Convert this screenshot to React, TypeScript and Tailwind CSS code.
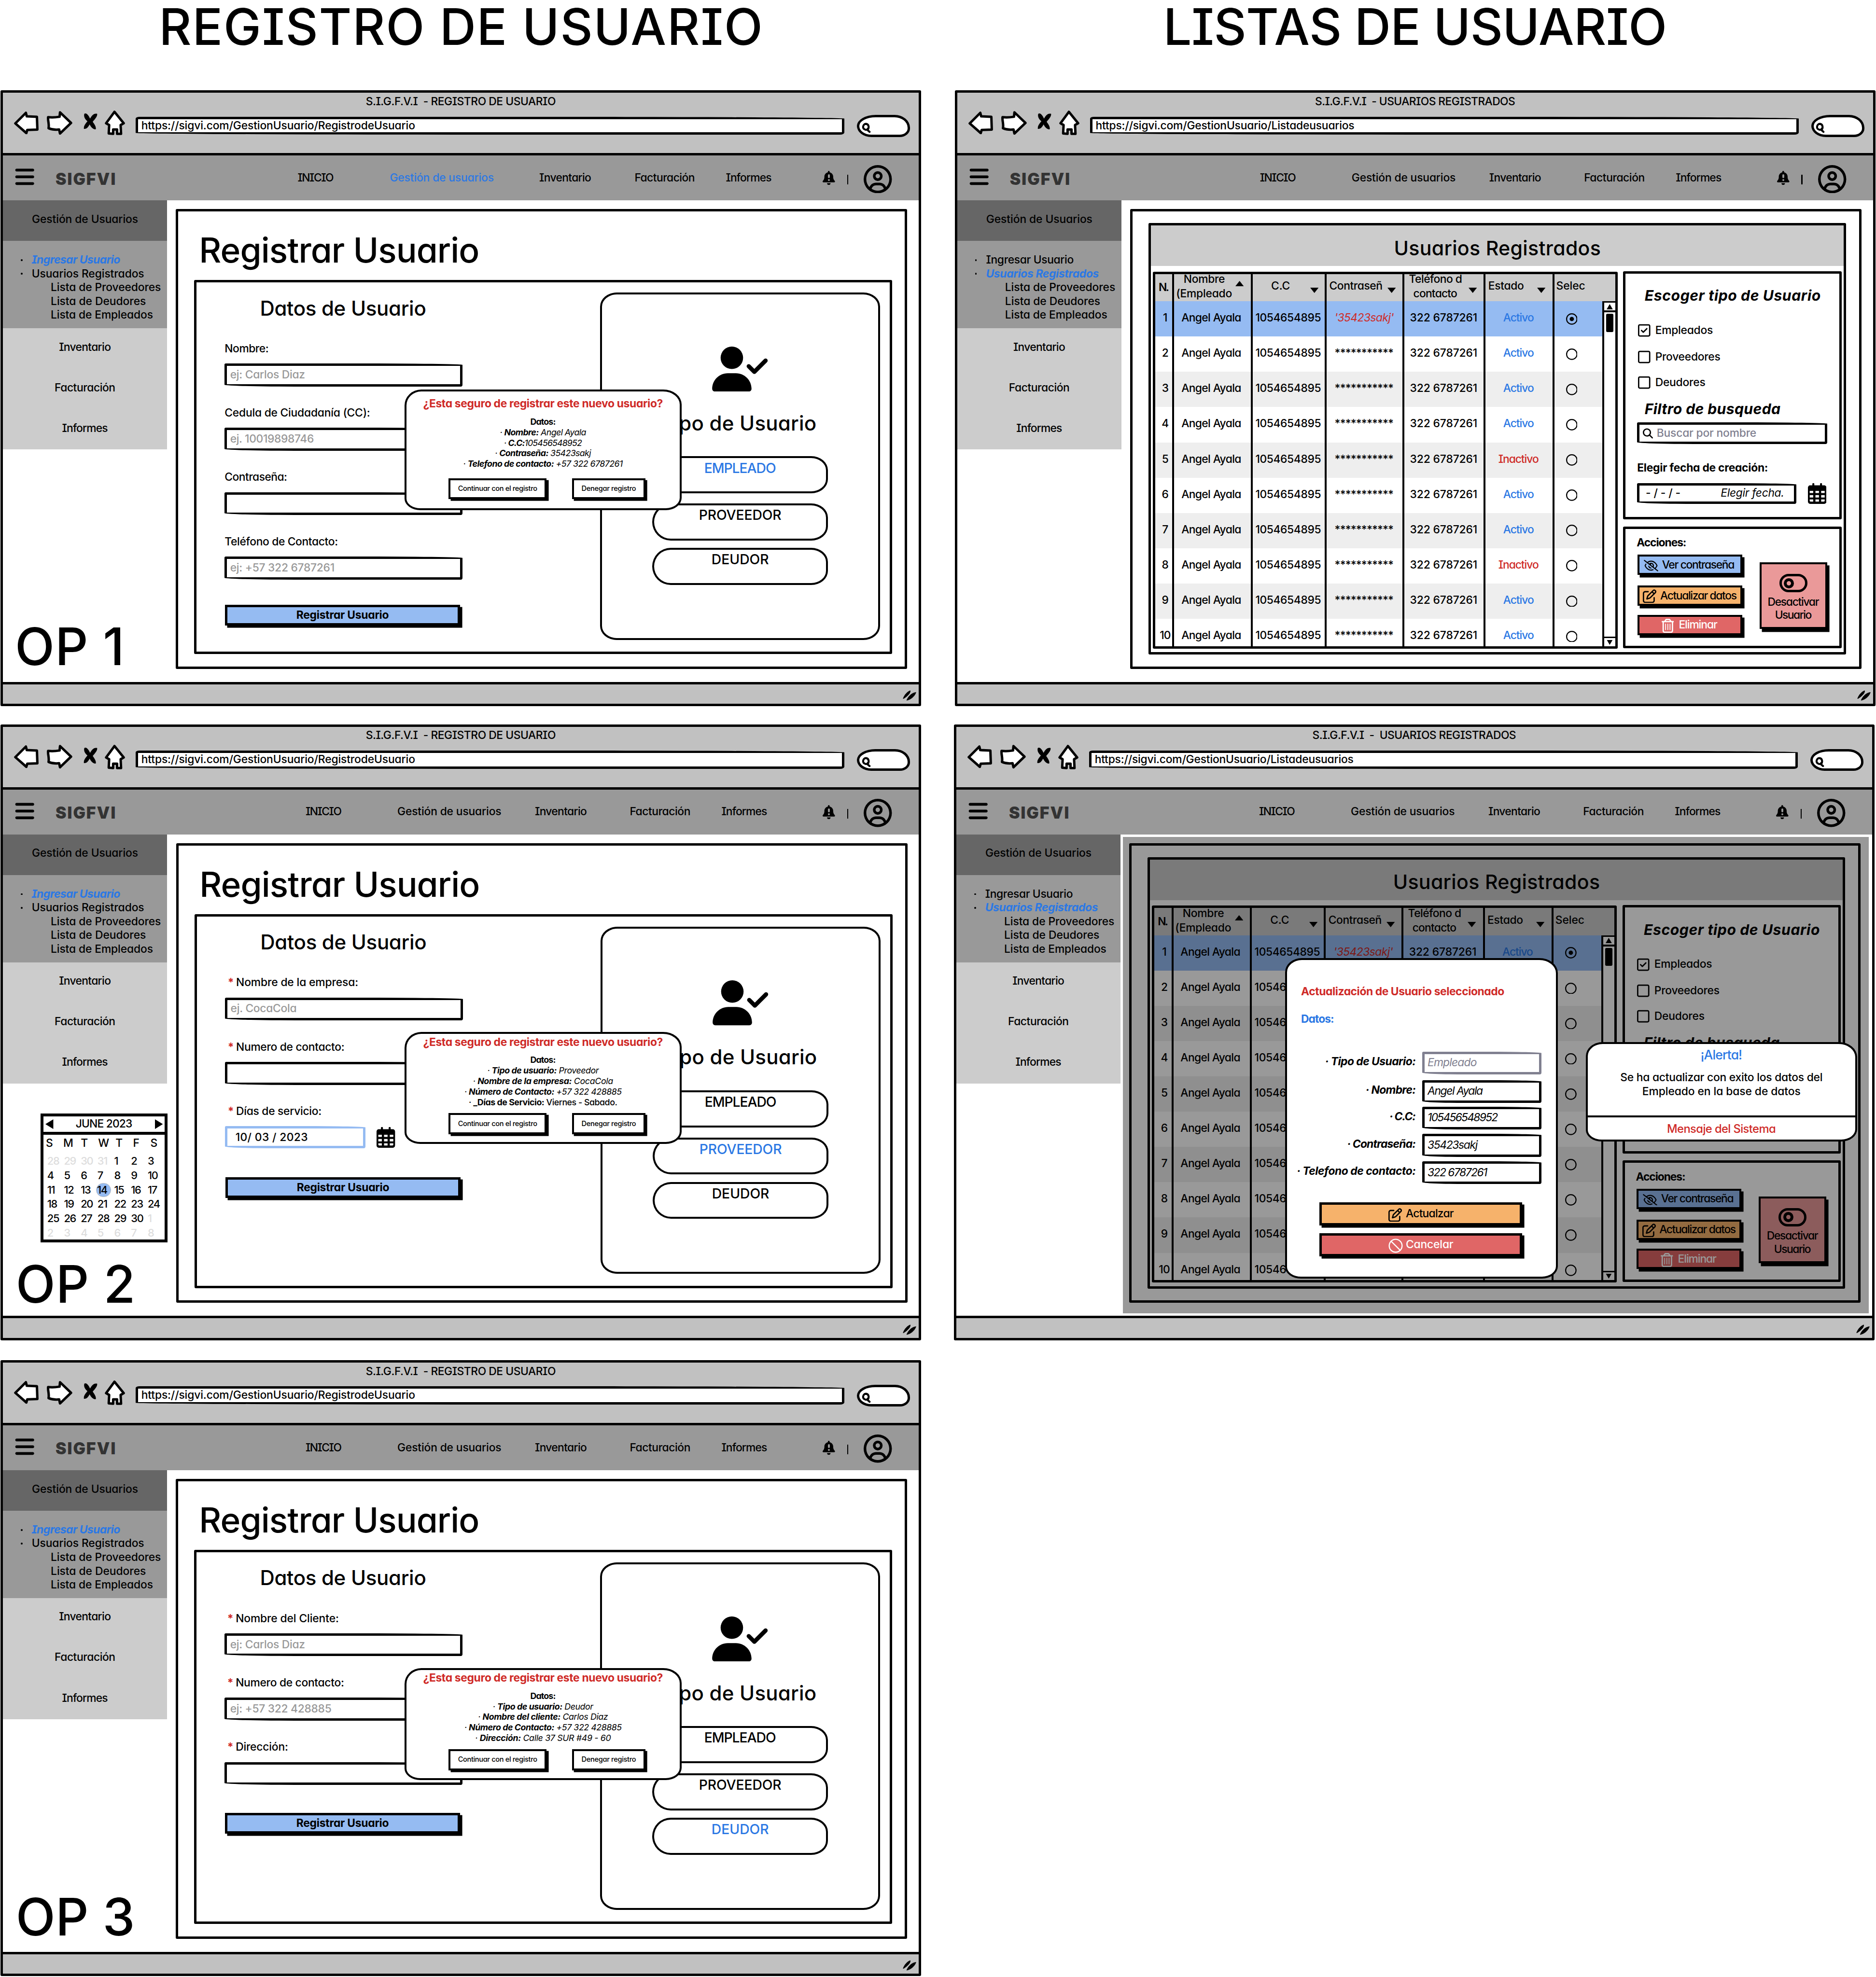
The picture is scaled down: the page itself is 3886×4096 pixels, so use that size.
import { useLayoutEffect, useRef, type ReactNode } from 'react';
import {
  FaBars,
  FaBell,
  FaMagnifyingGlass,
  FaRegCircle,
  FaRegCircleDot,
  FaRegCircleUser,
  FaRegEyeSlash,
  FaRegPenToSquare,
  FaRegSquare,
  FaRegSquareCheck,
  FaRegTrashCan,
  FaUserCheck,
} from 'react-icons/fa6';
import { Ban } from 'lucide-react';

/** Single line of text whose tracking is adjusted so that it fills its box. */
function Fit({ className = '', children }: { className?: string; children: ReactNode }) {
  const outer = useRef<HTMLDivElement>(null);
  const inner = useRef<HTMLSpanElement>(null);
  useLayoutEffect(() => {
    const o = outer.current;
    const i = inner.current;
    if (!o || !i) return;
    i.style.letterSpacing = '0px';
    const target = parseFloat(getComputedStyle(o).width);
    const ratio = i.getBoundingClientRect().width / o.getBoundingClientRect().width;
    const count = Math.max(1, (i.textContent || '').length - 1);
    i.style.letterSpacing = `${((target - target * ratio) / count).toFixed(3)}px`;
  }, []);
  return (
    <div ref={outer} className={`shrink-0 whitespace-pre ${className}`}>
      <span ref={inner} className="inline-block">
        {children}
      </span>
    </div>
  );
}

/* ---------- browser chrome ---------- */

function Toolbar({ url }: { url: ReactNode }) {
  return (
    <div className="flex items-start">
      <svg className="ml-[25px] mt-[2px] h-[52px] w-[57px] shrink-0" viewBox="0 0 57 52" fill="#fff" stroke="#000" strokeWidth="5.5" strokeLinejoin="round">
        <path d="M3 27 L27 3 L29 11 L52 12 L53 41 L30 42 L28 49 Z" />
      </svg>
      <svg className="ml-[16px] mt-[1px] h-[54px] w-[59px] shrink-0" viewBox="0 0 59 54" fill="#fff" stroke="#000" strokeWidth="5.5" strokeLinejoin="round">
        <path d="M4 14 C14 15 24 14 30 13 L31 3 L56 27 L31 51 L29 42 C20 43 12 42 5 39 C7 30 3 22 4 14 Z" />
      </svg>
      <svg className="ml-[24px] mt-[6px] h-[38px] w-[34px] shrink-0" viewBox="0 0 34 38" fill="#000">
        <path d="M3 2 C7 -1 12 4 16 13 C20 5 25 0 32 2 C33 8 27 14 22 20 C26 26 30 31 29 37 C23 38 18 32 15 26 C12 32 8 37 2 36 C1 29 6 24 10 19 C4 14 1 8 3 2 Z" />
      </svg>
      <svg className="ml-[16px] -mt-[1px] h-[57px] w-[46px] shrink-0" viewBox="0 0 46 57" fill="#fff" stroke="#000" strokeWidth="5.5" strokeLinejoin="round">
        <path d="M3 30 L22 4 L43 30 L36 34 L37 54 L28 54 L28 44 L19 44 L19 54 L9 53 L10 34 Z" />
      </svg>
      <div className="ml-[24px] mt-[14px] flex h-[41px] w-[1607px] shrink-0 items-center rounded-[9px_700px_10px_900px/4px_4px_5px_4px] border-[5.5px] border-black bg-white pl-[7px] leading-[30px]">
        {url}
      </div>
      <div className="ml-[28px] mt-[10px] h-[50px] w-[121px] shrink-0 rounded-[44px_36px_24px_34px/26px_30px_20px_26px] border-[5.5px] border-black bg-white">
        <svg className="ml-[3px] mt-[11px] h-[25px] w-[24px]" viewBox="0 0 24 25" fill="none" stroke="#000" strokeWidth="4.5" strokeLinecap="round">
          <path d="M16 17 C19 13 19 5 12 4 C4 4 3 16 10 17 C12 18 15 17 16 15 M14 17 L20 22" />
        </svg>
      </div>
    </div>
  );
}

function Bell() {
  return (
    <div className="relative">
      <FaBell className="h-[32px] w-[28px]" />
      <div className="absolute left-[12px] top-[8px] h-[9px] w-[4px] rounded-full bg-[#999]" />
      <div className="absolute left-[12px] top-[19px] h-[4px] w-[4px] rounded-full bg-[#999]" />
    </div>
  );
}

function CalendarIcon() {
  return (
    <svg className="ml-[26px] h-[47px] w-[42px] shrink-0" viewBox="0 0 42 47">
      <path
        fillRule="evenodd"
        d="M5 5 H10 V2 A2.2 2.2 0 0 1 14.5 2 V5 H27.5 V2 A2.2 2.2 0 0 1 32 2 V5 H37 A5 5 0 0 1 42 10 V42 A5 5 0 0 1 37 47 H5 A5 5 0 0 1 0 42 V10 A5 5 0 0 1 5 5 Z M4 17.5 V22.5 H12 V17.5 Z M17 17.5 V22.5 H25 V17.5 Z M30 17.5 V22.5 H38 V17.5 Z M4 27 V32.5 H12 V27 Z M17 27 V32.5 H25 V27 Z M30 27 V32.5 H38 V27 Z M4 37 V40 A2 2 0 0 0 6 42 H12 V37 Z M17 37 V42 H25 V37 Z M30 37 V42 H36 A2 2 0 0 0 38 40 V37 Z"
      />
    </svg>
  );
}

function Nav({ wide }: { wide?: boolean }) {
  return (
    <div className="flex h-[102px] shrink-0 items-center bg-[#999]">
      <FaBars className="-mt-[4px] h-[49px] w-[99px]" />
      <Fit className="ml-[20px] mt-[5px] w-[136px] text-[37px] font-black leading-[40px] text-[#333] [font-feature-settings:normal]">SIGFVI</Fit>
      <div className="flex items-center">
        {wide ? (
          <>
            <Fit className="ml-[413px] w-[82px]">INICIO</Fit>
            <Fit className="ml-[127px] w-[236px] text-[#2b78e4]">Gestión de usuarios</Fit>
            <Fit className="ml-[103px] w-[118px]">Inventario</Fit>
            <Fit className="ml-[98px] w-[137px]">Facturación</Fit>
            <Fit className="ml-[70px] mr-[116px] w-[104px]">Informes</Fit>
          </>
        ) : (
          <>
            <Fit className="ml-[431px] w-[82px]">INICIO</Fit>
            <Fit className="ml-[126px] w-[236px]">Gestión de usuarios</Fit>
            <Fit className="ml-[76px] w-[118px]">Inventario</Fit>
            <Fit className="ml-[97px] w-[138px]">Facturación</Fit>
            <Fit className="ml-[70px] mr-[126px] w-[104px]">Informes</Fit>
          </>
        )}
      </div>
      <Bell />
      <div className="ml-[27px] mt-[8px] h-[22px] w-[3px] bg-black" />
      <FaRegCircleUser className="ml-[35px] mt-[5px] h-[64px] w-[64px]" />
    </div>
  );
}

function Sidebar({ active }: { active: 'new' | 'list' }) {
  return (
    <div className="w-[371.5px] shrink-0">
      <div className="flex h-[92px] justify-center bg-[#666] pt-[28px]">
        <Fit className="w-[241px]">Gestión de Usuarios</Fit>
      </div>
      <div className="h-[198px] bg-[#999] pt-[28px]">
        <div className="flex h-[31px] items-center pl-[40px]">
          <div className="mr-[21px] h-[4px] w-[4px] rounded-full bg-black" />
          {active === 'new' ? (
            <Fit className="w-[201px] font-bold italic text-[#2b78e4]">Ingresar Usuario</Fit>
          ) : (
            <Fit className="w-[199px]">Ingresar Usuario</Fit>
          )}
        </div>
        <div className="flex h-[31px] items-center pl-[40px]">
          <div className="mr-[21px] h-[4px] w-[4px] rounded-full bg-black" />
          {active === 'new' ? (
            <Fit className="w-[255px]">Usuarios Registrados</Fit>
          ) : (
            <Fit className="w-[256px] font-bold italic text-[#2b78e4]">Usuarios Registrados</Fit>
          )}
        </div>
        <div className="pl-[108px] leading-[31px]">
          <Fit className="w-[250px]">Lista de Proveedores</Fit>
          <Fit className="w-[216px]">Lista de Deudores</Fit>
          <Fit className="w-[232px]">Lista de Empleados</Fit>
        </div>
      </div>
      <div className="flex h-[275px] flex-col items-center gap-[62px] bg-[#ccc] pt-[28px]">
        <Fit className="w-[118px]">Inventario</Fit>
        <Fit className="w-[138px]">Facturación</Fit>
        <Fit className="w-[104px]">Informes</Fit>
      </div>
    </div>
  );
}

function BrowserWindow({
  title,
  url,
  wideNav,
  active,
  caption,
  overlay,
  children,
  className = '',
}: {
  title: ReactNode;
  url: ReactNode;
  wideNav?: boolean;
  active: 'new' | 'list';
  caption?: ReactNode;
  overlay?: ReactNode;
  children: ReactNode;
  className?: string;
}) {
  return (
    <section className={`relative flex h-[1397px] w-[2087px] flex-col rounded-[3px] border-[5.5px] border-black bg-white ${className}`}>
      <header className="h-[142px] shrink-0 border-b-[5.5px] border-black bg-[#c1c1c1] pt-[5px]">
        <div className="flex h-[35px] justify-center">{title}</div>
        <Toolbar url={url} />
      </header>
      <Nav wide={wideNav} />
      <div className="flex h-[1092px] shrink-0">
        <div className="flex flex-col">
          <Sidebar active={active} />
          {caption}
        </div>
        <div className="ml-[20.5px] mt-[19.5px] h-[1043px] w-[1658px] rounded-[3px] border-[5.5px] border-black">{children}</div>
      </div>
      <footer className="flex h-[50px] justify-end border-t-[5.5px] border-black bg-[#c1c1c1] pr-[5px] pt-[14px]">
        <svg className="h-[25px] w-[32px]" viewBox="0 0 32 25">
          <path d="M2 19 C5 10 12 3 18 1 C19 7 11 14 3 19 Z M10 23 C14 13 22 6 31 5 C28 14 20 21 10 23 Z" fill="#000" stroke="#000" strokeLinejoin="round" />
        </svg>
      </footer>
      {overlay}
    </section>
  );
}

/* ---------- user registration ---------- */

const Star = () => <span className="w-[19px] font-bold text-[#cf2a27]">*</span>;

function Field({ required, label, children }: { required?: boolean; label: ReactNode; children: ReactNode }) {
  return (
    <div className="h-[146px]">
      <div className={required ? 'flex pl-[6px]' : 'flex'}>
        {required && <Star />}
        {label}
      </div>
      <div className="mt-[18.5px] flex items-center">{children}</div>
    </div>
  );
}

function Input({ children }: { children?: ReactNode }) {
  return (
    <div className="flex h-[52px] w-[539px] items-center rounded-[3px_240px_4px_200px/3px_3px_4px_4px] border-[5.5px] border-black bg-white pb-[1px] pl-[7px] text-[25px] text-[#999]">
      {children}
    </div>
  );
}

function RoleButton({ active, className, children }: { active?: boolean; className: string; children: ReactNode }) {
  return (
    <div
      className={`flex h-[84px] w-[399px] justify-center rounded-[42px_38px_38px_42px/42px_32px_32px_42px] border-[4.4px] border-black pt-[8px] text-[31px] ${active ? 'text-[#2b78e4]' : 'text-black'} ${className}`}
    >
      {children}
    </div>
  );
}

type Role = 'empleado' | 'proveedor' | 'deudor';

function RegisterPage({ role, fields }: { role: Role; fields: ReactNode }) {
  return (
    <>
      <Fit className="ml-[47px] mt-[48.5px] w-[636px] text-[78px] font-medium leading-[80px]">Registrar Usuario</Fit>
      <div className="ml-[35.5px] mt-[27.5px] flex h-[848px] w-[1583px] rounded-[3px] border-[5.5px] border-black">
        <div className="w-[915.5px] pl-[64px] pt-[33px]">
          <Fit className="ml-[80px] w-[377px] text-[46px] font-medium leading-[50px]">Datos de Usuario</Fit>
          <div className="mt-[52px]">{fields}</div>
          <div
            className={`ml-[1px] flex h-[47px] w-[533px] items-center justify-center border-[5.5px] border-black bg-[#95bbf2] font-bold shadow-[5px_5px_0_#000] ${role === 'empleado' ? 'mt-[12px]' : 'mt-[18px]'}`}
          >
            <Fit className="w-[210px]">Registrar Usuario</Fit>
          </div>
        </div>
        <div className="mt-[22.5px] flex h-[788px] w-[635px] flex-col items-center rounded-[38px/32px] border-[4.4px] border-black pt-[118px]">
          <FaUserCheck className="h-[102px] w-[128px]" />
          <Fit className="-ml-[8px] mt-[47px] w-[354px] text-[46px] font-medium leading-[50px]">Tipo de Usuario</Fit>
          <RoleButton active={role === 'empleado'} className="mt-[50px]">
            <Fit className="w-[163px]">EMPLEADO</Fit>
          </RoleButton>
          <RoleButton active={role === 'proveedor'} className="mt-[23px]">
            <Fit className="w-[187px]">PROVEEDOR</Fit>
          </RoleButton>
          <RoleButton active={role === 'deudor'} className="mt-[17px]">
            <Fit className="w-[130px]">DEUDOR</Fit>
          </RoleButton>
        </div>
      </div>
    </>
  );
}

function ConfirmPopup({ tall, children }: { tall?: boolean; children: ReactNode }) {
  return (
    <div
      className={`absolute left-[910.5px] flex w-[628px] flex-col items-center rounded-[38px_42px_36px_36px/36px_34px_28px_26px] border-[4.4px] border-black bg-white ${tall ? 'top-[672.5px] h-[274px] pt-[14px]' : 'top-[692.5px] h-[254px] pt-[4px]'}`}
    >
      <Fit className="w-[544px] text-[25px] font-bold text-[#cf2a27]">¿Esta seguro de registrar este nuevo usuario?</Fit>
      <div className="mt-[13px] flex flex-col items-center text-[19.5px] leading-[24px]">
        <Fit className="w-[58px] font-bold">Datos:</Fit>
        {children}
      </div>
      <div className={`flex gap-[58px] pl-[18px] text-[16px] ${tall ? 'mt-[20px]' : 'mt-[12.5px]'}`}>
        <div className="flex h-[48px] w-[222px] items-center justify-center border-[4.4px] border-black shadow-[5px_4px_0_#000]">
          <Fit className="w-[180px]">Continuar con el registro</Fit>
        </div>
        <div className="flex h-[48px] w-[166px] items-center justify-center border-[4.4px] border-black shadow-[4px_4px_0_#000]">
          <Fit className="w-[124px]">Denegar registro</Fit>
        </div>
      </div>
    </div>
  );
}

function RegisterWindow({ caption, overlay, role, fields, className }: { caption: ReactNode; overlay: ReactNode; role: Role; fields: ReactNode; className?: string }) {
  return (
    <BrowserWindow
      title={<Fit className="w-[431px] text-[25px]">{'S.I.G.F.V.I  - REGISTRO DE USUARIO'}</Fit>}
      url={<Fit className="w-[621px]">https://sigvi.com/GestionUsuario/RegistrodeUsuario</Fit>}
      wideNav={role === 'empleado'}
      active="new"
      caption={caption}
      overlay={overlay}
      className={className}
    >
      <RegisterPage role={role} fields={fields} />
    </BrowserWindow>
  );
}

const weekRows: number[][] = [
  [28, 29, 30, 31, 1, 2, 3],
  [4, 5, 6, 7, 8, 9, 10],
  [11, 12, 13, 14, 15, 16, 17],
  [18, 19, 20, 21, 22, 23, 24],
  [25, 26, 27, 28, 29, 30, 1],
  [2, 3, 4, 5, 6, 7, 8],
];

function CalendarCard() {
  return (
    <div className="ml-[85.5px] mt-[68px] h-[292px] w-[287px] border-[6.6px] border-black bg-white">
      <div className="flex h-[42px] items-center justify-between border-b-[6.6px] border-black px-[4px]">
        <svg className="h-[22px] w-[18px]" viewBox="0 0 18 22">
          <path d="M0 11 L18 0 V22 Z" />
        </svg>
        <Fit className="w-[129px]">JUNE 2023</Fit>
        <svg className="h-[22px] w-[18px]" viewBox="0 0 18 22">
          <path d="M18 11 L0 0 V22 Z" />
        </svg>
      </div>
      <div className="grid grid-cols-[repeat(7,39.5px)] pl-[5px] pt-[4px]">
        {['S', 'M', 'T', 'W', 'T', 'F', 'S'].map((d, i) => (
          <div key={i}>{d}</div>
        ))}
      </div>
      <div className="mt-[9px] grid grid-cols-[repeat(7,38px)] pl-[8px] text-[24px] leading-[32.8px]">
        {weekRows.map((row, r) =>
          row.map((d, c) => {
            const faint = (r === 0 && d > 7) || (r >= 4 && d < 9);
            const today = r === 2 && d === 14;
            return (
              <div key={`${r}-${c}`} className={faint ? 'tracking-[-1.5px] text-[#ddd]' : 'tracking-[-1.5px]'}>
                {today ? (
                  <div className="-ml-[3px] h-[32.8px] w-[34px] rounded-full border-[2px] border-[#bbb] bg-[#95bbf2] pl-[1px] leading-[29px]">{d}</div>
                ) : (
                  d
                )}
              </div>
            );
          }),
        )}
      </div>
    </div>
  );
}

/* ---------- registered users ---------- */

function Arrow({ up, className = '' }: { up?: boolean; className?: string }) {
  return (
    <svg className={`h-[12px] w-[19px] shrink-0 ${className}`} viewBox="0 0 19 12">
      <path d={up ? 'M9.5 0 L19 12 H0 Z' : 'M0 0 H19 L9.5 12 Z'} />
    </svg>
  );
}

const CELL = 'flex items-center border-r-[4.4px] border-black';

function UserTable() {
  const rows = Array.from({ length: 10 }, (_, i) => ({ n: i + 1, active: i !== 4 && i !== 7 }));
  return (
    <div className="ml-[4px] mt-[12.5px] flex h-[855px] w-[1054px] flex-col overflow-hidden rounded-[3px] border-[5.5px] border-black">
      <div className="grid h-[62px] shrink-0 grid-cols-[43.5px_177.5px_168px_176.5px_184px_156px_137.5px] bg-[#ccc]">
        <div className={CELL}>
          <Fit className="ml-[8px] w-[24px] font-semibold">N.</Fit>
        </div>
        <div className={CELL}>
          <div className="-mt-[6px] ml-[4px] w-[127px] leading-[33px]">
            <Fit className="ml-[17px] w-[94px]">Nombre</Fit>
            <Fit className="w-[127px]">(Empleado</Fit>
          </div>
          <Arrow up className="-mt-[18px] ml-[8px]" />
        </div>
        <div className={CELL}>
          <Fit className="-mt-[6px] ml-[42px] w-[43px]">C.C</Fit>
          <Arrow className="ml-[46px] mt-[13px]" />
        </div>
        <div className={CELL}>
          <Fit className="-mt-[6px] ml-[6px] w-[121px]">Contraseñ</Fit>
          <Arrow className="ml-[11px] mt-[13px]" />
        </div>
        <div className={CELL}>
          <div className="-mt-[6px] ml-[10px] w-[121px] leading-[33px]">
            <Fit className="w-[121px]">Teléfono d</Fit>
            <Fit className="ml-[10px] w-[100px]">contacto</Fit>
          </div>
          <Arrow className="ml-[14px] mt-[13px]" />
        </div>
        <div className={CELL}>
          <Fit className="-mt-[6px] ml-[6px] w-[81px]">Estado</Fit>
          <Arrow className="ml-[30px] mt-[13px]" />
        </div>
        <div className="flex items-center">
          <Fit className="-mt-[6px] ml-[4px] w-[66px]">Selec</Fit>
        </div>
      </div>
      <div className="flex min-h-0 flex-1">
        <div className="w-[1014px] shrink-0">
          {rows.map(({ n, active }) => (
            <div
              key={n}
              className={`grid h-[80px] grid-cols-[43.5px_177.5px_168px_176.5px_184px_156px_108.5px] ${n === 1 ? 'bg-[#95bbf2]' : n % 2 ? 'bg-[#eee]' : 'bg-white'}`}
            >
              <div className={`${CELL} justify-center pb-[4px] pl-[6px] tracking-[-1px]`}>{n}</div>
              <div className={`${CELL} justify-center pb-[4px] pr-[5px]`}>
                <Fit className="w-[136px]">Angel Ayala</Fit>
              </div>
              <div className={`${CELL} justify-center pb-[4px] pr-[2px]`}>
                <Fit className="w-[149px]">1054654895</Fit>
              </div>
              <div className={`${CELL} justify-center pb-[4px] pr-[2px]`}>
                {n === 1 ? (
                  <Fit className="w-[135px] italic text-[#cf2a27]">'35423sakj'</Fit>
                ) : (
                  <Fit className="w-[134px] font-medium">***********</Fit>
                )}
              </div>
              <div className={`${CELL} justify-center pb-[4px] pr-[2px]`}>
                <Fit className="w-[153px]">322 6787261</Fit>
              </div>
              <div className={`${CELL} justify-center pb-[4px] pr-[2px]`}>
                {active ? <Fit className="w-[70px] text-[#2b78e4]">Activo</Fit> : <Fit className="w-[92px] text-[#cf2a27]">Inactivo</Fit>}
              </div>
              <div className="flex items-center pl-[26px]">
                {n === 1 ? <FaRegCircleDot className="h-[26px] w-[26px]" /> : <FaRegCircle className="h-[26px] w-[26px]" />}
              </div>
            </div>
          ))}
        </div>
        <div className="flex w-[29px] shrink-0 flex-col items-center border-l-[4.4px] border-t-[3.3px] border-black bg-white">
          <div className="flex h-[22px] w-full items-center justify-center border-b-[4.4px] border-black">
            <svg className="h-[12px] w-[14px]" viewBox="0 0 14 12">
              <path d="M7 0 L14 12 H0 Z" />
            </svg>
          </div>
          <div className="mt-[3px] h-[41px] w-[16px] rounded-[3px] bg-black" />
          <div className="mt-auto flex h-[21px] w-full items-center justify-center border-t-[3.3px] border-black">
            <svg className="h-[11px] w-[14px]" viewBox="0 0 14 12">
              <path d="M0 0 H14 L7 12 Z" />
            </svg>
          </div>
        </div>
      </div>
    </div>
  );
}

const ACTION = 'flex w-[237px] h-[46px] items-center border-[4.4px] border-black shadow-[5px_6px_0_#000]';

function ListPage() {
  return (
    <div className="ml-[36px] mt-[26.5px] flex h-[979px] w-[1582px] flex-col rounded-[3px] border-[5.5px] border-black">
      <div className="flex h-[92px] shrink-0 justify-center bg-[#ccc] pt-[27px]">
        <Fit className="w-[469px] text-[45px] font-medium leading-[50px]">Usuarios Registrados</Fit>
      </div>
      <div className="flex">
        <UserTable />
        <div className="ml-[13px] mt-[11.5px]">
          <div className="h-[563px] w-[495px] rounded-[3px] border-[5.5px] border-black">
            <Fit className="ml-[43px] mt-[30px] w-[399px] text-[33px] font-bold italic leading-[40px]">Escoger tipo de Usuario</Fit>
            <div className="ml-[28px] mt-[43px] flex h-[32px] items-center">
              <FaRegSquareCheck className="h-[32px] w-[28px]" />
              <Fit className="ml-[11px] w-[131px]">Empleados</Fit>
            </div>
            <div className="ml-[28px] mt-[28px] flex h-[32px] items-center">
              <FaRegSquare className="h-[32px] w-[28px]" />
              <Fit className="ml-[11px] w-[148px]">Proveedores</Fit>
            </div>
            <div className="ml-[28px] mt-[26px] flex h-[32px] items-center">
              <FaRegSquare className="h-[32px] w-[28px]" />
              <Fit className="ml-[11px] w-[114px]">Deudores</Fit>
            </div>
            <Fit className="ml-[43px] mt-[24px] w-[308px] text-[33px] font-bold italic leading-[40px]">Filtro de busqueda</Fit>
            <div className="ml-[26px] mt-[11px] flex h-[49px] w-[431px] items-center rounded-[3px_200px_4px_160px/3px_3px_4px_4px] border-[5.5px] border-black pl-[7px]">
              <FaMagnifyingGlass className="h-[24px] w-[23px]" />
              <Fit className="ml-[9px] w-[226px] text-[#808090]">Buscar por nombre</Fit>
            </div>
            <Fit className="ml-[26px] mt-[39px] w-[297px] font-bold">Elegir fecha de creación:</Fit>
            <div className="ml-[26px] mt-[19px] flex items-center">
              <div className="flex h-[48px] w-[361px] items-center justify-between rounded-[3px_160px_4px_140px/3px_3px_4px_4px] border-[5.5px] border-black pb-[1px] pl-[14px] pr-[22px]">
                <Fit className="w-[79px]">- / - / -</Fit>
                <Fit className="w-[144px] italic">Elegir fecha.</Fit>
              </div>
              <CalendarIcon />
            </div>
          </div>
          <div className="mt-[16px] flex h-[276px] w-[495px] rounded-[3px] border-[5.5px] border-black">
            <div className="ml-[25px] w-[281px]">
              <Fit className="mt-[17px] w-[113px] font-bold">Acciones:</Fit>
              <div className={`${ACTION} ml-[2px] mt-[12px] bg-[#95bbf2]`}>
                <FaRegEyeSlash className="ml-[10px] mt-[3px] h-[26px] w-[33px]" />
                <Fit className="ml-[8px] w-[165px]">Ver contraseña</Fit>
              </div>
              <div className={`${ACTION} ml-[2px] mt-[24px] bg-[#f6b26b]`}>
                <FaRegPenToSquare className="ml-[8px] mt-[2px] h-[31px] w-[31px]" />
                <Fit className="ml-[8px] w-[174px]">Actualizar datos</Fit>
              </div>
              <div className={`${ACTION} ml-[2px] mt-[20px] bg-[#e06666] text-white`}>
                <FaRegTrashCan className="ml-[50px] mt-[4px] h-[32px] w-[28px]" />
                <Fit className="ml-[11px] w-[88px]">Eliminar</Fit>
              </div>
            </div>
            <div className="-ml-[2px] mt-[76px] flex h-[151px] w-[153px] flex-col items-center border-[4.4px] border-black bg-[#ea9999] pt-[22px] leading-[30px] shadow-[5px_7px_0_#000]">
              <div className="mb-[7px] flex h-[42px] w-[64px] items-center rounded-full border-[5.5px] border-black pl-[5px]">
                <div className="h-[23px] w-[23px] rounded-full border-[6.6px] border-black" />
              </div>
              <Fit className="w-[117px]">Desactivar</Fit>
              <Fit className="w-[84px]">Usuario</Fit>
            </div>
          </div>
        </div>
      </div>
    </div>
  );
}

function ModalField({ label, disabled, className = '', children }: { label: ReactNode; disabled?: boolean; className?: string; children: ReactNode }) {
  return (
    <div className={`flex h-[52px] items-center justify-end pr-[33px] ${className}`}>
      <div className="mb-[6px] mr-[14px] font-bold italic">{label}</div>
      <div
        className={`flex h-[52px] w-[271px] items-center rounded-[3px_120px_4px_100px/3px_3px_4px_4px] border-[5.5px] pb-[1px] pl-[7px] italic ${disabled ? 'border-[#808090] text-[#808090]' : 'border-black'}`}
      >
        {children}
      </div>
    </div>
  );
}

function EditOverlay() {
  return (
    <>
      <div className="absolute left-[377px] top-[250px] h-[1080px] w-[1692px] bg-black/40" />
      <div className="absolute left-[745px] top-[525px] flex h-[726px] w-[619px] flex-col rounded-[38px_42px_36px_36px/32px_34px_28px_26px] border-[4.4px] border-black bg-white">
        <Fit className="ml-[32px] mt-[56px] w-[461px] font-bold text-[#cf2a27]">Actualización de Usuario seleccionado</Fit>
        <Fit className="ml-[32px] mt-[33px] w-[75px] font-bold text-[#2b78e4]">Datos:</Fit>
        <ModalField disabled className="mt-[58px]" label={<Fit className="w-[206px]">· Tipo de Usuario:</Fit>}>
          <Fit className="w-[112px]">Empleado</Fit>
        </ModalField>
        <ModalField className="mt-[13px]" label={<Fit className="w-[114px]">· Nombre:</Fit>}>
          <Fit className="w-[126px]">Angel Ayala</Fit>
        </ModalField>
        <ModalField className="mt-[8px]" label={<Fit className="w-[60px]">· C.C:</Fit>}>
          <Fit className="w-[160px]">105456548952</Fit>
        </ModalField>
        <ModalField className="mt-[10px]" label={<Fit className="w-[156px]">· Contraseña:</Fit>}>
          <Fit className="w-[114px]">35423sakj</Fit>
        </ModalField>
        <ModalField className="mt-[10px]" label={<Fit className="w-[270px]">· Telefono de contacto:</Fit>}>
          <Fit className="w-[136px]">322 6787261</Fit>
        </ModalField>
        <div className="ml-[74px] mt-[41px] flex h-[53px] w-[459px] items-center border-[5.5px] border-black bg-[#f6b26b] pl-[150px] shadow-[5px_5px_0_#000]">
          <FaRegPenToSquare className="mt-[4px] h-[31px] w-[31px]" />
          <Fit className="ml-[9px] w-[109px]">Actualzar</Fit>
        </div>
        <div className="ml-[74px] mt-[17px] flex h-[53px] w-[459px] items-center border-[5.5px] border-black bg-[#e06666] pl-[149px] text-white shadow-[5px_5px_0_#000]">
          <Ban className="mt-[4px] h-[35px] w-[35px]" strokeWidth={1.8} />
          <Fit className="ml-[6px] w-[108px]">Cancelar</Fit>
        </div>
      </div>
      <div className="absolute left-[1427px] top-[715.5px] flex h-[225px] w-[615px] flex-col items-center rounded-[38px_42px_36px_36px/32px_34px_28px_26px] border-[4.4px] border-black bg-white">
        <Fit className="mt-[9px] w-[95px] text-[29px] text-[#2b78e4]">¡Alerta!</Fit>
        <Fit className="mt-[22px] w-[459px]">Se ha actualizar con exito los datos del</Fit>
        <Fit className="mt-[2px] w-[359px]">Empleado en la base de datos</Fit>
        <div className="mt-[38px] flex w-full justify-center border-t-[4.4px] border-black pt-[12px]">
          <Fit className="w-[247px] text-[26px] text-[#cf2a27]">Mensaje del Sistema</Fit>
        </div>
      </div>
    </>
  );
}

export default function App() {
  const listUrl = <Fit className="w-[587px]">https://sigvi.com/GestionUsuario/Listadeusuarios</Fit>;
  return (
    <div className="flex h-[4484px] w-[4254px] overflow-hidden bg-white font-['Inter',sans-serif] text-[25px] font-[450] leading-[30px] text-black [font-feature-settings:'cv11','cv08'] [zoom:0.9135]">
      <div className="ml-[1.5px] w-[2087px]">
        <h1 className="flex h-[205px] justify-center text-[114px] font-medium leading-[122px]">
          <Fit className="w-[1369px]">REGISTRO DE USUARIO</Fit>
        </h1>
        <RegisterWindow
          role="empleado"
          caption={<Fit className="ml-[27px] mt-[387px] w-[248px] text-[117px] font-medium leading-[120px]">OP 1</Fit>}
          fields={
            <>
              <Field label={<Fit className="w-[100px]">Nombre:</Fit>}>
                <Input>
                  <Fit className="w-[170px]">ej: Carlos Diaz</Fit>
                </Input>
              </Field>
              <Field label={<Fit className="w-[330px]">Cedula de Ciudadanía (CC):</Fit>}>
                <Input>
                  <Fit className="w-[190px]">ej. 10019898746</Fit>
                </Input>
              </Field>
              <Field label={<Fit className="w-[142px]">Contraseña:</Fit>}>
                <Input />
              </Field>
              <Field label={<Fit className="w-[257px]">Teléfono de Contacto:</Fit>}>
                <Input>
                  <Fit className="w-[237px]">ej: +57 322 6787261</Fit>
                </Input>
              </Field>
            </>
          }
          overlay={
            <ConfirmPopup tall>
              <Fit className="w-[196px] italic">· <b>Nombre:</b> Angel Ayala</Fit>
              <Fit className="w-[177px] italic">· <b>C.C:</b>105456548952</Fit>
              <Fit className="w-[218px] italic">· <b>Contraseña:</b> 35423sakj</Fit>
              <Fit className="w-[362px] italic">· <b>Telefono de contacto:</b> +57 322 6787261</Fit>
            </ConfirmPopup>
          }
        />
        <RegisterWindow
          className="mt-[41px]"
          role="proveedor"
          caption={
            <>
              <CalendarCard />
              <Fit className="ml-[29px] mt-[35px] w-[271px] text-[117px] font-medium leading-[120px]">OP 2</Fit>
            </>
          }
          fields={
            <>
              <Field required label={<Fit className="w-[277px]">Nombre de la empresa:</Fit>}>
                <Input>
                  <Fit className="w-[150px]">ej. CocaCola</Fit>
                </Input>
              </Field>
              <Field required label={<Fit className="w-[246px]">Numero de contacto:</Fit>}>
                <Input />
              </Field>
              <Field required label={<Fit className="w-[194px]">Días de servicio:</Fit>}>
                <div className="flex h-[50px] w-[318px] items-center rounded-[3px_140px_4px_120px/3px_3px_4px_4px] border-[5.5px] border-[#95bbf2] pl-[18px] text-[25px]">
                  <Fit className="w-[164px]">10/ 03 / 2023</Fit>
                </div>
                <CalendarIcon />
              </Field>
            </>
          }
          overlay={
            <ConfirmPopup>
              <Fit className="w-[253px] italic">· <b>Tipo de usuario:</b> Proveedor</Fit>
              <Fit className="w-[318px] italic">· <b>Nombre de la empresa:</b> CocaCola</Fit>
              <Fit className="w-[357px] italic">· <b>Número de Contacto:</b> +57 322 428885</Fit>
              <Fit className="w-[337px]">· <b>_Días de Servicio:</b> Viernes - Sabado.</Fit>
            </ConfirmPopup>
          }
        />
        <RegisterWindow
          className="mt-[45px]"
          role="deudor"
          caption={<Fit className="ml-[29px] mt-[388px] w-[270px] text-[117px] font-medium leading-[120px]">OP 3</Fit>}
          fields={
            <>
              <Field required label={<Fit className="w-[234px]">Nombre del Cliente:</Fit>}>
                <Input>
                  <Fit className="w-[170px]">ej: Carlos Diaz</Fit>
                </Input>
              </Field>
              <Field required label={<Fit className="w-[246px]">Numero de contacto:</Fit>}>
                <Input>
                  <Fit className="w-[230px]">ej: +57 322 428885</Fit>
                </Input>
              </Field>
              <Field required label={<Fit className="w-[119px]">Dirección:</Fit>}>
                <Input />
              </Field>
            </>
          }
          overlay={
            <ConfirmPopup>
              <Fit className="w-[228px] italic">· <b>Tipo de usuario:</b> Deudor</Fit>
              <Fit className="w-[295px] italic">· <b>Nombre del cliente:</b> Carlos Diaz</Fit>
              <Fit className="w-[357px] italic">· <b>Número de Contacto:</b> +57 322 428885</Fit>
              <Fit className="w-[308px] italic">· <b>Dirección:</b> Calle 37 SUR #49 - 60</Fit>
            </ConfirmPopup>
          }
        />
      </div>
      <div className="ml-[77px] w-[2087px]">
        <h1 className="flex h-[205px] justify-center text-[114px] font-medium leading-[122px]">
          <Fit className="w-[1142px]">LISTAS DE USUARIO</Fit>
        </h1>
        <BrowserWindow title={<Fit className="w-[454px] text-[25px]">{'S.I.G.F.V.I  - USUARIOS REGISTRADOS'}</Fit>} url={listUrl} active="list">
          <ListPage />
        </BrowserWindow>
        <BrowserWindow
          className="-ml-[2px] mt-[41px]"
          title={<Fit className="w-[462px] text-[25px]">{'S.I.G.F.V.I  -  USUARIOS REGISTRADOS'}</Fit>}
          url={listUrl}
          active="list"
          overlay={<EditOverlay />}
        >
          <ListPage />
        </BrowserWindow>
      </div>
    </div>
  );
}
